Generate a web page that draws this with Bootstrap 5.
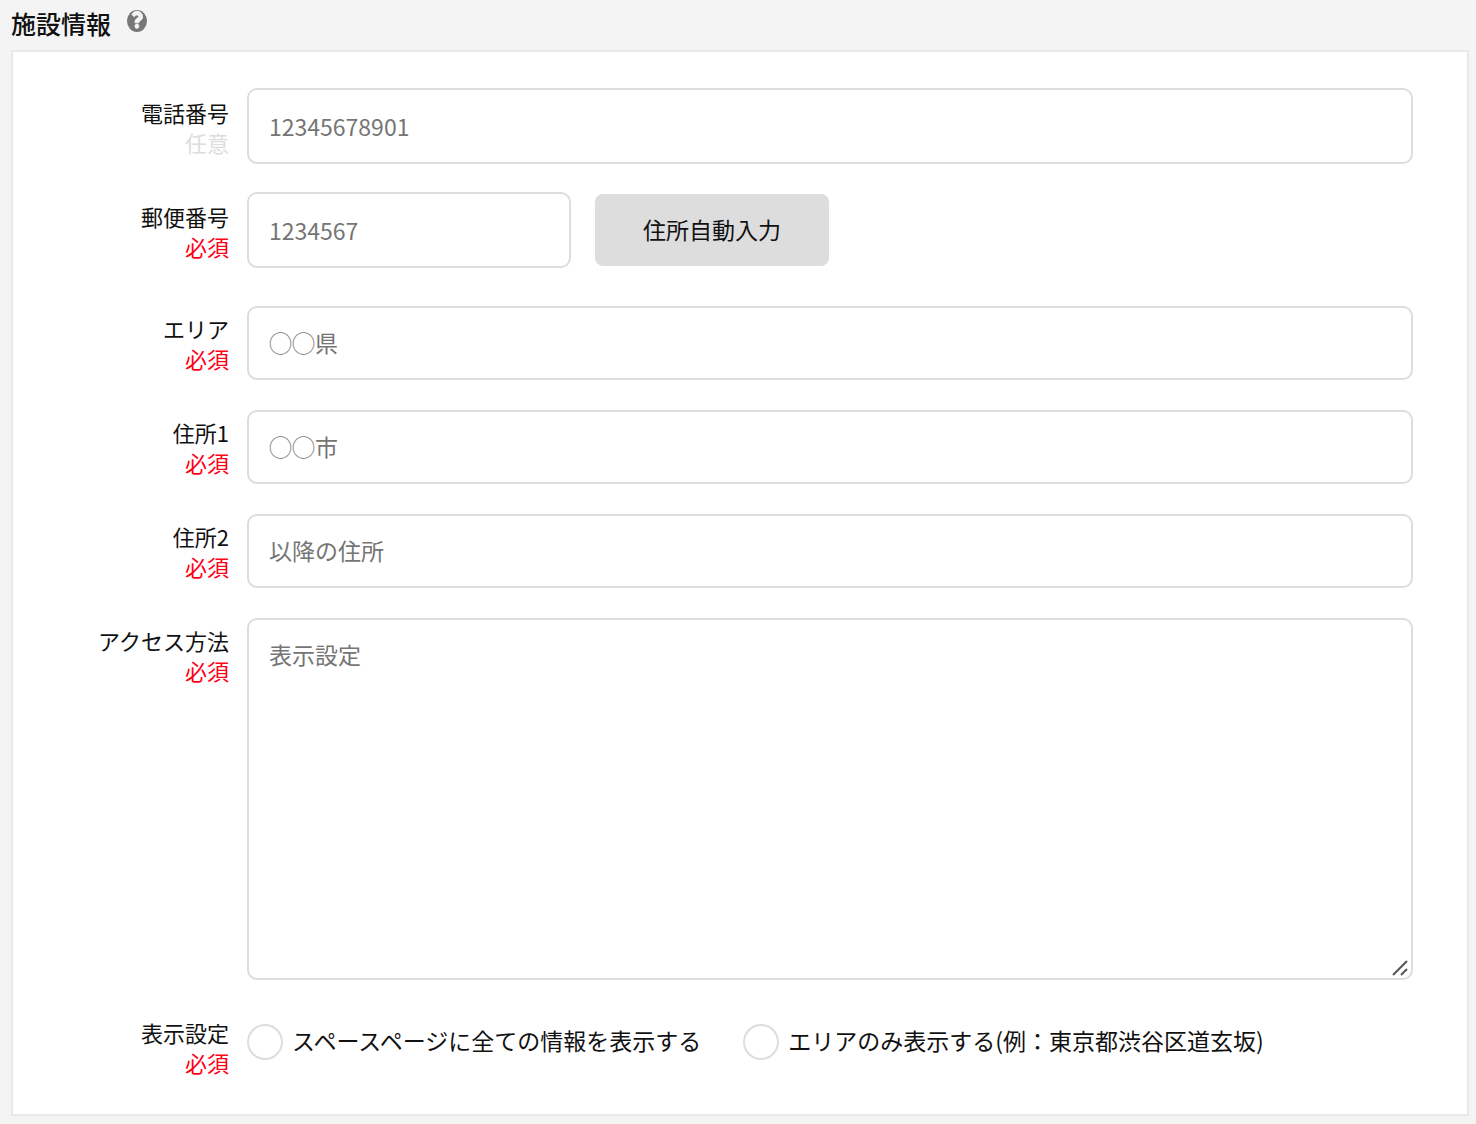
<!DOCTYPE html>
<html lang="ja">
<head>
<meta charset="utf-8">
<meta name="viewport" content="width=device-width, initial-scale=1">
<title>施設情報</title>
<link href="https://cdn.jsdelivr.net/npm/bootstrap@5.3.0/dist/css/bootstrap.min.css" rel="stylesheet">
<style>
  body { background: #f4f4f4; color: #111; font-family: "Noto Sans CJK JP", sans-serif; font-size: 23px; line-height: 34px; }
  .page { padding: 5px 7px 8px 11px; }
  .page-head { height: 36px; gap: 16px; margin-bottom: 9px; }
  .page-title { font-size: 25px; line-height: 36px; font-weight: 500; }
  .help-btn { width: 20px; height: 32px; }
  .panel { border: 2px solid #e9e9e9; padding: 36px 54px 37px 0; }
  .field-row { display: flex; gap: 18px; margin-bottom: 30px; }
  .field-row:last-child { margin-bottom: 0; }
  .field-name { flex: 0 0 216px; padding-top: 7px; font-size: 22px; line-height: 30px; text-align: right; }
  .form-control, .form-control:focus { height: 74px; padding: 17px 20px 19px; border: 2px solid #ddd; border-radius: 10px; font-size: 23px; line-height: 34px; color: #111; }
  .form-control::placeholder { color: #757575; opacity: 1; }
  .num-row { margin-bottom: 28px; }
  .num-row .field-name { padding-top: 9px; }
  .num-row .form-control { height: 76px; padding-top: 19px; }
  .zip-row { margin-bottom: 38px; }
  .req { color: #ff0019; }
  .opt { color: #ddd; }
  .zip-row .zip-input { width: 324px; }
  .fill-btn, .fill-btn:hover { width: 234px; height: 72px; padding: 0 0 2px; background: #ddd; border: 0; border-radius: 8px; font-size: 23px; line-height: 34px; color: #111; }
  textarea.form-control, textarea.form-control:focus { display: block; height: 362px; resize: vertical; }
  textarea::-webkit-resizer { background: transparent; }
  .grip { right: 5px; bottom: 4px; width: 16px; height: 16px; pointer-events: none; }
  .choices { padding-top: 14px; column-gap: 42px; }
  .choice { gap: 9px; height: 36px; }
  .choice span { padding-bottom: 4px; }
  .choice input { flex: none; appearance: none; width: 36px; height: 36px; margin: 0; border: 2px solid #ddd; border-radius: 50%; background: #fff; }
  .choice input:checked { background: radial-gradient(#777 45%, #fff 50%); }
</style>
</head>
<body>
<main class="page">
  <header class="page-head d-flex">
    <h1 class="page-title m-0">施設情報</h1>
    <button type="button" class="help-btn btn p-0 border-0 d-flex align-items-center" aria-label="ヘルプ">
      <svg width="20" height="22" viewBox="8 8 496 496" preserveAspectRatio="none" aria-hidden="true"><circle cx="256" cy="256" r="248" fill="#777"/><path fill="#f4f4f4" stroke="#f4f4f4" stroke-width="22" d="M263 36c-64 0-106 27-136 74l64 50c19-26 34-37 62-37 23 0 44 12 44 34 0 18-14 27-34 39-32 18-56 36-56 78v22h94v-10c0-32 92-38 92-126 0-74-64-124-130-124zM254 326a48 48 0 1 0 0 96 48 48 0 1 0 0-96z"/></svg>
    </button>
  </header>

  <form class="panel bg-white">
    <div class="field-row num-row">
      <label class="field-name" for="tel">電話番号<span class="d-block opt">任意</span></label>
      <input class="form-control" id="tel" type="tel" placeholder="12345678901">
    </div>
    <div class="field-row num-row zip-row">
      <label class="field-name" for="zip">郵便番号<span class="d-block req">必須</span></label>
      <div class="d-flex align-items-center gap-4">
        <input class="form-control zip-input" id="zip" type="text" placeholder="1234567">
        <button type="button" class="btn fill-btn">住所自動入力</button>
      </div>
    </div>
    <div class="field-row">
      <label class="field-name" for="area">エリア<span class="d-block req">必須</span></label>
      <input class="form-control" id="area" type="text" placeholder="◯◯県">
    </div>
    <div class="field-row">
      <label class="field-name" for="addr1">住所1<span class="d-block req">必須</span></label>
      <input class="form-control" id="addr1" type="text" placeholder="◯◯市">
    </div>
    <div class="field-row">
      <label class="field-name" for="addr2">住所2<span class="d-block req">必須</span></label>
      <input class="form-control" id="addr2" type="text" placeholder="以降の住所">
    </div>
    <div class="field-row">
      <label class="field-name" for="access">アクセス方法<span class="d-block req">必須</span></label>
      <div class="position-relative flex-grow-1">
        <textarea class="form-control" id="access" placeholder="表示設定"></textarea>
        <svg class="grip position-absolute" viewBox="0 0 16 16" aria-hidden="true"><path d="M1 15 15 1M9 15l6-6" stroke="#555" stroke-width="2" fill="none"/></svg>
      </div>
    </div>
    <div class="field-row" role="radiogroup" aria-labelledby="disp">
      <div class="field-name" id="disp">表示設定<span class="d-block req">必須</span></div>
      <div class="choices d-flex flex-wrap align-items-start">
        <label class="choice d-flex align-items-center" for="show-all"><input type="radio" name="disp" id="show-all"><span>スペースページに全ての情報を表示する</span></label>
        <label class="choice d-flex align-items-center" for="show-area"><input type="radio" name="disp" id="show-area"><span>エリアのみ表示する(例：東京都渋谷区道玄坂)</span></label>
      </div>
    </div>
  </form>
</main>
<script src="https://cdn.jsdelivr.net/npm/bootstrap@5.3.0/dist/js/bootstrap.bundle.min.js"></script>
</body>
</html>
